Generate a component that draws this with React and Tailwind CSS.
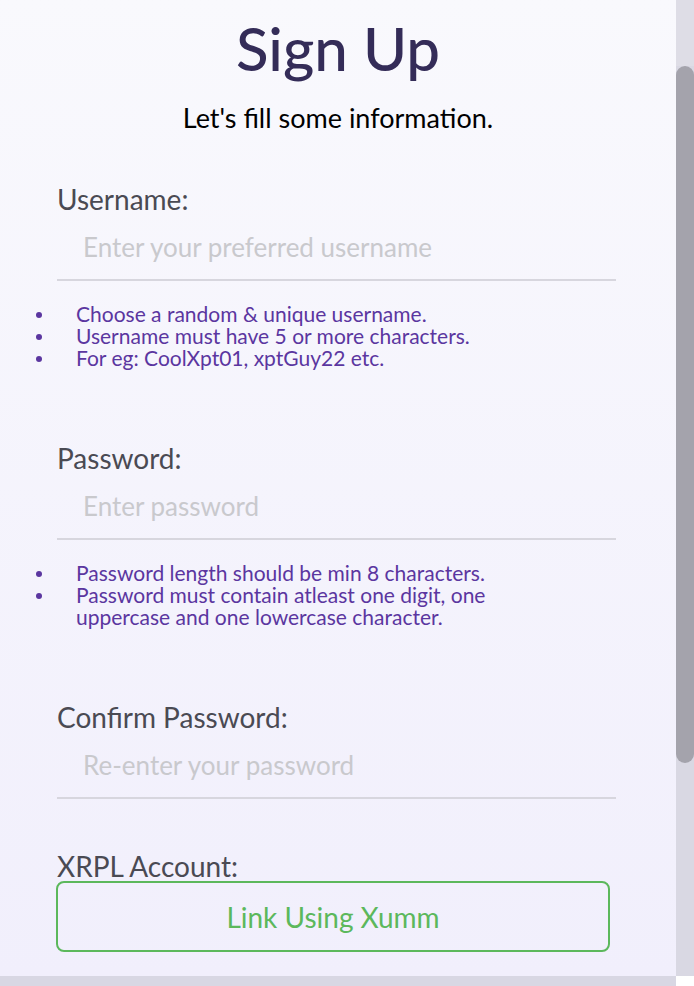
import React from 'react';

// ─── Field with underline input ──────────────────────────────
const Field = ({ label, placeholder, type = 'text' }) => (
  <div>
    <label className="block text-[28px] leading-[34px] text-[#4a4a53]">{label}</label>
    <input
      type={type}
      placeholder={placeholder}
      className="block w-full h-[65px] pl-[26px] pb-[2px] bg-transparent border-b-2 border-[#d7d6de] outline-none text-[26px] text-[#4a4a53] placeholder:text-[#c9c9cd]"
    />
  </div>
);

const Hints = ({ items }) => (
  <ul className="mt-[22px] -ml-[21px] text-[21px] leading-[22px] text-[#5b36a0]">
    {items.map((t, i) => (
      <li key={i} className="flex">
        <span className="w-[40px] shrink-0 flex justify-start pt-[9px]">
          <span className="w-[6px] h-[6px] rounded-full bg-[#5b36a0]" />
        </span>
        <span>{t}</span>
      </li>
    ))}
  </ul>
);

export default function App() {
  return (
    <div className="h-[986px] flex flex-col overflow-hidden" style={{ fontFamily: 'Lato, "Noto Sans", sans-serif' }}>
      <div className="flex flex-1 min-h-0">
        <main className="flex-1 bg-gradient-to-b from-[#f9f9fd] to-[#f1effc]">
          <h1 className="mt-[17px] text-center text-[60px] leading-[62px] font-medium text-[#342c58]">Sign Up</h1>
          <p className="mt-[24px] text-center text-[27px] leading-[30px] text-black">Let's fill some information.</p>

          <form className="mt-[49px] pl-[57px] pr-[60px]">
            <Field label="Username:" placeholder="Enter your preferred username" />
            <Hints
              items={[
                'Choose a random & unique username.',
                'Username must have 5 or more characters.',
                'For eg: CoolXpt01, xptGuy22 etc.',
              ]}
            />

            <div className="mt-[72px]">
              <Field label="Password:" placeholder="Enter password" type="password" />
            </div>
            <Hints
              items={[
                'Password length should be min 8 characters.',
                <>Password must contain atleast one digit, one<br />uppercase and one lowercase character.</>,
              ]}
            />

            <div className="mt-[72px]">
              <Field label="Confirm Password:" placeholder="Re-enter your password" type="password" />
            </div>

            <label className="block mt-[52px] text-[28px] leading-[30px] text-[#4a4a53]">XRPL Account:</label>
            <button
              type="button"
              className="block w-[554px] -ml-px h-[71px] border-2 border-[#5cb85c] rounded-lg text-[28px] text-[#5cb85c]"
            >
              Link Using Xumm
            </button>
          </form>
        </main>

        {/* scrollbar */}
        <div className="w-[18px] flex flex-col bg-[#d9d8e3]">
          <div className="h-[66px] bg-[#dedde6]" />
          <div className="h-[697px] rounded-t-[9px] rounded-b-[9px] bg-[#a4a3ac]" />
        </div>
      </div>
      <div className="h-[10px] flex">
        <div className="flex-1 bg-[#d8d7e3]" />
        <div className="w-[18px] bg-white" />
      </div>
    </div>
  );
}
